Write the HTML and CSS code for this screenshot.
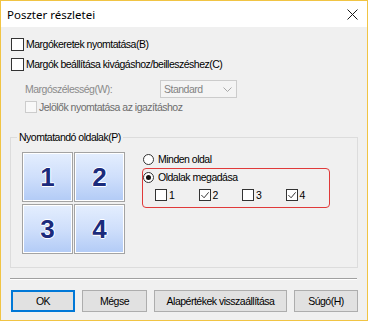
FILE: index.html
```html
<!DOCTYPE html>
<html lang="hu">
<head>
<meta charset="utf-8">
<title>Poszter részletei</title>
<link rel="stylesheet" href="styles.css">
</head>
<body>
<div class="window">
  <div class="titlebar">
    <span class="title">Poszter részletei</span>
    <svg class="close" width="11" height="11" viewBox="0 0 11 11"><path d="M0.5 0.5L10.5 10.5M10.5 0.5L0.5 10.5" stroke="#1a1a1a" stroke-width="1" fill="none"/></svg>
  </div>
  <div class="content">
    <div class="check-row r1"><span class="cb"></span><span>Margókeretek nyomtatása(B)</span></div>
    <div class="check-row"><span class="cb"></span><span>Margók beállítása kivágáshoz/beilleszéshez(C)</span></div>
    <div class="select-row">
      <span class="select-label">Margószélesség(W):</span>
      <div class="select"><span class="select-value">Standard</span><span class="select-arrow"><svg width="9" height="5" viewBox="0 0 9 5"><path d="M0.5 0.5L4.5 4.5L8.5 0.5" stroke="#a8a8a8" fill="none"/></svg></span></div>
    </div>
    <div class="check-row disabled"><span class="cb"></span><span>Jelölők nyomtatása az igazításhoz</span></div>
    <fieldset class="group">
      <legend>Nyomtatandó oldalak(P)</legend>
      <div class="group-body">
        <div class="tiles">
          <div class="tile"><span>1</span></div>
          <div class="tile"><span>2</span></div>
          <div class="tile"><span>3</span></div>
          <div class="tile"><span>4</span></div>
        </div>
        <div class="options">
          <div class="radio-row"><span class="radio"></span><span>Minden oldal</span></div>
          <div class="pages-box">
            <div class="radio-row"><span class="radio on"></span><span>Oldalak megadása</span></div>
            <div class="page-checks">
              <div class="page-check"><span class="cb"></span><span>1</span></div>
              <div class="page-check"><span class="cb checked"><svg width="11" height="11" viewBox="0 0 11 11"><path d="M1.5 5L4.5 8L9.5 2" stroke="#222" stroke-width="1" fill="none"/></svg></span><span>2</span></div>
              <div class="page-check"><span class="cb"></span><span>3</span></div>
              <div class="page-check"><span class="cb checked"><svg width="11" height="11" viewBox="0 0 11 11"><path d="M1.5 5L4.5 8L9.5 2" stroke="#222" stroke-width="1" fill="none"/></svg></span><span>4</span></div>
            </div>
          </div>
        </div>
      </div>
    </fieldset>
    <div class="sep"></div>
    <div class="buttons">
      <button class="btn btn-ok">OK</button>
      <button class="btn btn-cancel">Mégse</button>
      <button class="btn btn-reset">Alapértékek visszaállítása</button>
      <button class="btn btn-help">Súgó(H)</button>
    </div>
  </div>
</div>
</body>
</html>
```
FILE: styles.css
```css
* { box-sizing: border-box; }
html, body { margin: 0; padding: 0; }
body {
  width: 368px;
  height: 321px;
  overflow: hidden;
  font-family: "Liberation Sans", Arial, sans-serif;
  font-size: 10.5px;
  letter-spacing: -0.5px;
  color: #000;
}
.window {
  width: 368px;
  height: 321px;
  border: 1px solid #f1c443;
  background: #f0f0f0;
  display: flex;
  flex-direction: column;
}
.titlebar {
  height: 26px;
  background: #fff;
  display: flex;
  align-items: center;
  justify-content: space-between;
  padding: 0 9px 0 6px;
  flex: none;
}
.title {
  font-family: "Noto Sans", "Open Sans", sans-serif;
  font-size: 11.5px;
  letter-spacing: 0;
  color: #000;
}
.close { display: block; }
.content {
  flex: 1;
  padding: 7px 9px 0 9px;
  display: flex;
  flex-direction: column;
}
.check-row {
  height: 20px;
  display: flex;
  align-items: center;
  gap: 2px;
}
.cb {
  width: 13px;
  height: 13px;
  border: 1px solid #333;
  background: #fff;
  display: inline-flex;
  align-items: center;
  justify-content: center;
  flex: none;
}
.check-row .cb { margin-left: 1px; }
.select-row {
  margin-top: 6px;
  height: 18px;
  padding-left: 15px;
  display: flex;
  align-items: center;
}
.select-label {
  width: 135px;
  color: #8b8b8b;
}
.select {
  width: 77px;
  height: 18px;
  border: 1px solid #cccccc;
  background: #f4f4f4;
  display: flex;
  align-items: center;
  justify-content: space-between;
  padding-left: 3px;
}
.select-value { color: #838383; }
.select-arrow {
  width: 17px;
  height: 16px;
  display: flex;
  align-items: center;
  justify-content: center;
}
.check-row.disabled {
  height: 18px;
  padding-left: 15px;
  color: #6d6d6d;
}
.check-row.disabled .cb {
  width: 12px;
  height: 12px;
  border-color: #cccccc;
  background: #f8f8f8;
  margin-left: 0;
}
.group {
  margin: 14px 0 0 0;
  padding: 0 0 11px 0;
  border: 1px solid #dcdcdc;
  height: 138px;
}
.group legend {
  margin-left: 6px;
  padding: 0 2px;
  line-height: 14px;
}
.group-body {
  display: flex;
  margin-top: 8px;
  padding-left: 11px;
}
.tiles {
  display: grid;
  grid-template-columns: 51px 51px;
  grid-template-rows: 50px 50px;
  column-gap: 1px;
  row-gap: 2px;
}
.tile {
  border: 1px solid #a3a3a3;
  box-shadow: inset 0 0 0 1px #ffffff;
  background: linear-gradient(to bottom, #e4eefe 0%, #cfdffb 50%, #b2cbf6 100%);
  display: flex;
  align-items: center;
  justify-content: center;
}
.tile span {
  font-family: "Liberation Sans", Arial, sans-serif;
  font-size: 26px;
  font-weight: bold;
  letter-spacing: 0;
  color: #1b2b7c;
  text-shadow: 1px 0 0 #fff, -1px 0 0 #fff, 0 1px 0 #fff, 0 -1px 0 #fff;
}
.options {
  margin-left: 17px;
  width: 188px;
  display: flex;
  flex-direction: column;
}
.radio-row {
  height: 14px;
  display: flex;
  align-items: center;
  gap: 4px;
}
.options > .radio-row { padding-left: 1px; }
.radio {
  width: 11px;
  height: 11px;
  border: 1px solid #333;
  border-radius: 50%;
  background: #fff;
  position: relative;
  flex: none;
}
.radio.on::after {
  content: "";
  position: absolute;
  left: 2px;
  top: 2px;
  width: 5px;
  height: 5px;
  border-radius: 50%;
  background: #111;
}
.pages-box {
  margin-top: 2px;
  border: 1px solid #e03a3a;
  border-radius: 4px;
  padding: 1px 0 5px 0;
}
.page-checks {
  display: flex;
  margin-top: 4px;
  padding-left: 12px;
}
.page-check {
  width: 50px;
  display: flex;
  align-items: center;
  gap: 2px;
  height: 14px;
}
.page-check .cb { width: 12px; height: 12px; }
.sep {
  margin-top: 10px;
  height: 2px;
  border-top: 1px solid #a0a0a0;
  border-bottom: 1px solid #ffffff;
  margin-right: 1px;
}
.buttons {
  margin-top: 10px;
  display: flex;
  gap: 7px;
  padding-left: 1px;
}
.btn {
  height: 22px;
  font-family: "Liberation Sans", Arial, sans-serif;
  font-size: 10.5px;
  letter-spacing: -0.5px;
  color: #000;
  background: #e1e1e1;
  border: 1px solid #adadad;
  padding: 0;
}
.btn-ok { width: 64px; border: 2px solid #0078d7; }
.btn-cancel { width: 65px; }
.btn-reset { width: 133px; }
.btn-help { width: 64px; }
```
